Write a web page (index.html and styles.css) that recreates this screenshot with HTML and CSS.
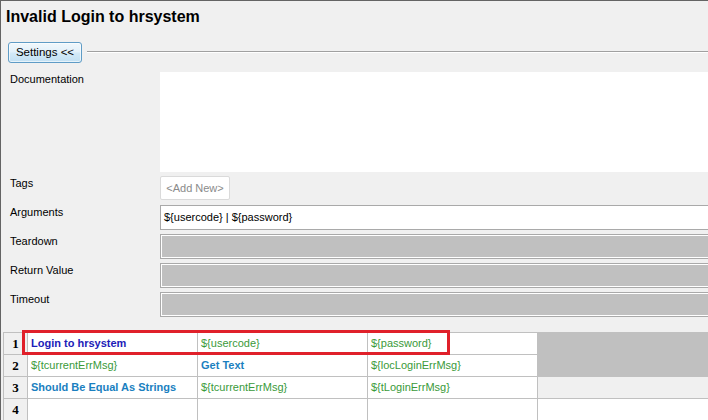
FILE: index.html
```html
<!DOCTYPE html>
<html>
<head>
<meta charset="utf-8">
<link rel="stylesheet" href="styles.css">
</head>
<body>
<div class="panel">
  <h1 class="title">Invalid Login to hrsystem</h1>
  <div class="settings-row">
    <button class="settings-btn">Settings &lt;&lt;</button>
    <div class="rule"></div>
  </div>
  <div class="form">
    <div class="row row-doc"><div class="label">Documentation</div><div class="doc"></div></div>
    <div class="row row-tags"><div class="label">Tags</div><div class="tags"><span class="add-new">&lt;Add New&gt;</span></div></div>
    <div class="row row-field"><div class="label">Arguments</div><div class="field">${usercode} | ${password}</div></div>
    <div class="row row-field"><div class="label">Teardown</div><div class="field disabled"></div></div>
    <div class="row row-field"><div class="label">Return Value</div><div class="field disabled"></div></div>
    <div class="row row-field"><div class="label">Timeout</div><div class="field disabled"></div></div>
  </div>
  <div class="grid-wrap">
    <div class="grid">
      <div class="rh">1</div>
      <div class="cell kw-user">Login to hrsystem</div>
      <div class="cell var">${usercode}</div>
      <div class="cell var">${password}</div>
      <div class="cell gray span2"></div>

      <div class="rh">2</div>
      <div class="cell var">${tcurrentErrMsg}</div>
      <div class="cell kw">Get Text</div>
      <div class="cell var">${locLoginErrMsg}</div>

      <div class="rh">3</div>
      <div class="cell kw">Should Be Equal As Strings</div>
      <div class="cell var">${tcurrentErrMsg}</div>
      <div class="cell var">${tLoginErrMsg}</div>
      <div class="cell light"></div>

      <div class="rh">4</div>
      <div class="cell"></div>
      <div class="cell"></div>
      <div class="cell"></div>
      <div class="cell"></div>
    </div>
    <div class="highlight"></div>
  </div>
</div>
</body>
</html>
```

FILE: styles.css
```css
html, body {
  margin: 0;
  padding: 0;
  width: 708px;
  height: 420px;
  overflow: hidden;
  background: #f0f0f0;
}

.panel {
  width: 740px;
  height: 419px;
  border-top: 1px solid #646464;
  border-left: 1px solid #646464;
  background: #f0f0f0;
  font-family: "Liberation Sans", Arial, sans-serif;
  font-size: 11px;
  color: #000;
  overflow: hidden;
}

.title {
  margin: 0;
  padding: 6px 0 0 5px;
  font-size: 16px;
  line-height: 20px;
  font-weight: bold;
}

.settings-row {
  display: flex;
  align-items: flex-start;
  margin-top: 15px;
  padding-left: 7px;
  height: 21px;
}

.settings-btn {
  box-sizing: border-box;
  width: 74px;
  height: 21px;
  margin: 0;
  padding: 0;
  border: 1px solid #5f9cc6;
  border-radius: 3px;
  background: linear-gradient(#f1f8fc 0%, #e3f1fa 45%, #d2e9f7 55%, #c2e0f3 100%);
  box-shadow: inset 0 0 0 1px rgba(255, 255, 255, 0.6);
  font-family: "Liberation Sans", Arial, sans-serif;
  font-size: 11.5px;
  color: #000;
  line-height: 19px;
}

.rule {
  flex: 1;
  margin-top: 9px;
  margin-left: 5px;
  border-top: 1px solid #a0a0a0;
  border-bottom: 1px solid #ffffff;
}

.form {
  margin-top: 9px;
  display: flex;
  flex-direction: column;
}

.row {
  display: flex;
  align-items: flex-start;
}

.label {
  width: 150px;
  flex: none;
  padding-left: 9px;
  line-height: 14px;
}

.row-doc {
  height: 100px;
}

.doc {
  flex: 1;
  height: 100px;
  background: #ffffff;
}

.row-tags {
  margin-top: 4px;
  height: 24px;
}

.tags {
  flex: 1;
}

.add-new {
  display: inline-block;
  box-sizing: border-box;
  width: 70px;
  height: 24px;
  line-height: 22px;
  text-align: center;
  background: #ffffff;
  border: 1px solid #dadada;
  border-radius: 2px;
  color: #8a8a8a;
}

.row-field {
  margin-top: 5px;
  height: 25px;
}

.row-field + .row-field {
  margin-top: 4px;
}

.field {
  flex: 1;
  box-sizing: border-box;
  height: 25px;
  border: 1px solid #a9a9a9;
  background: #ffffff;
  padding-left: 3px;
  line-height: 22px;
}

.field.disabled {
  background: #c0c0c0;
  box-shadow: inset 0 0 0 1px #ffffff;
}

.grid-wrap {
  position: relative;
  margin-top: 15px;
  padding-left: 2px;
}

.grid {
  display: grid;
  grid-template-columns: 23px 169px 169px 169px 200px;
  grid-auto-rows: 21px;
  gap: 1px;
  width: max-content;
  background: #c0c0c0;
  border-top: 1px solid #c0c0c0;
  border-left: 1px solid #c0c0c0;
}

.rh {
  background: #f0f0f0;
  text-align: center;
  font-family: "Liberation Serif", "Times New Roman", serif;
  font-weight: bold;
  font-size: 13px;
  line-height: 21px;
}

.cell {
  background: #ffffff;
  padding-left: 3px;
  line-height: 21px;
  white-space: nowrap;
}

.cell.gray {
  background: #c0c0c0;
}

.cell.light {
  background: #f0f0f0;
}

.span2 {
  grid-row: span 2;
}

.kw-user {
  color: #1c1cb8;
  font-weight: bold;
}

.kw {
  color: #1a7fc0;
  font-weight: bold;
}

.var {
  color: #3a9a3a;
}

.highlight {
  position: absolute;
  left: 21px;
  top: -2px;
  width: 428px;
  height: 25px;
  box-sizing: border-box;
  border: 3px solid #e0202a;
}
```
